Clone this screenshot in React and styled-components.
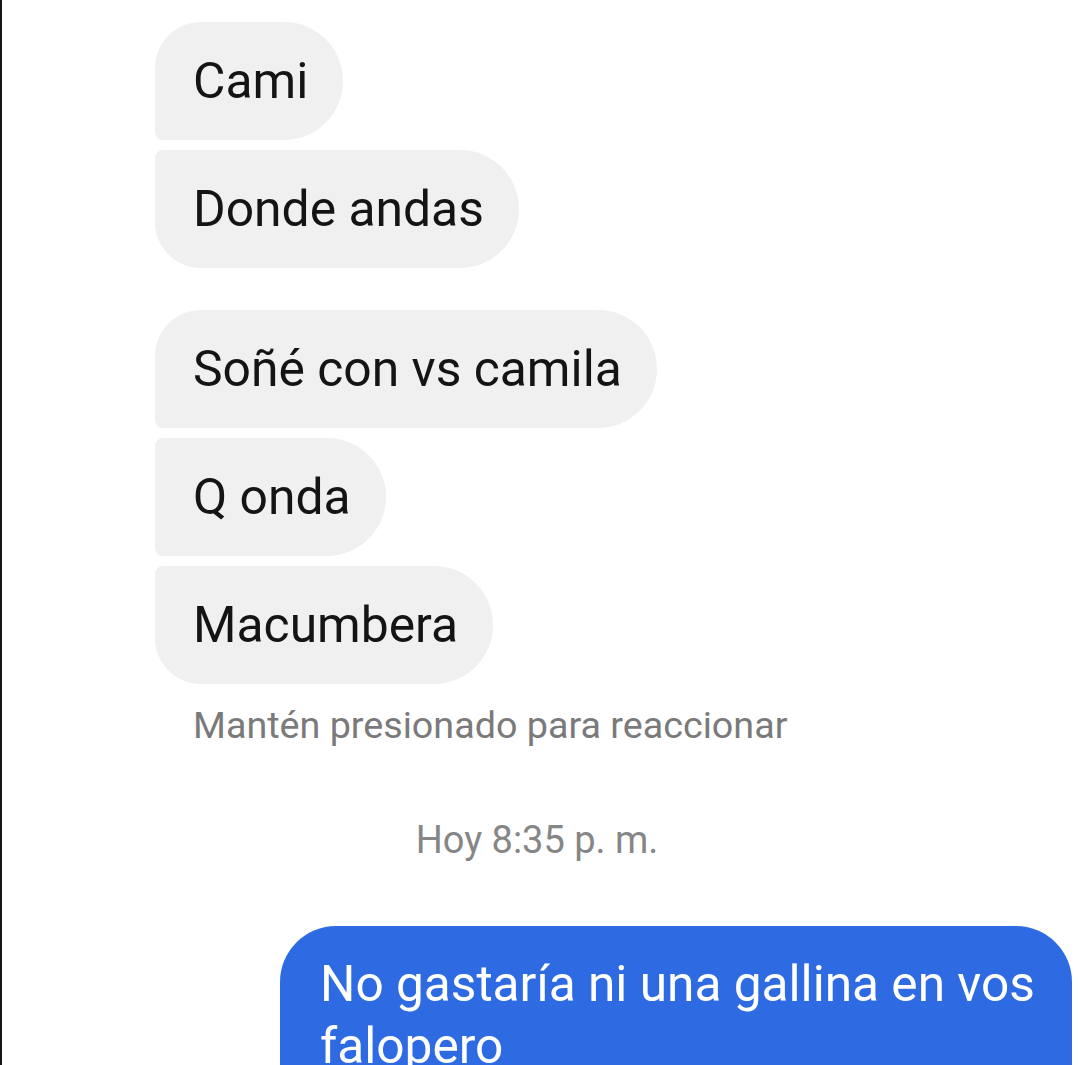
import React from "react";
import styled, { createGlobalStyle } from "styled-components";

const GlobalStyle = createGlobalStyle`
  html, body {
    margin: 0;
    padding: 0;
    background: #ffffff;
  }
  body {
    font-family: Roboto, "Noto Sans", "Liberation Sans", sans-serif;
  }
`;

const Screen = styled.div`
  width: 1080px;
  height: 1065px;
  box-sizing: border-box;
  border-left: 2px solid #151515;
  background: #ffffff;
  overflow: hidden;
  padding: 22px 8px 0 153px;
  display: flex;
  flex-direction: column;
`;

const Group = styled.div`
  display: flex;
  flex-direction: column;
  align-items: flex-start;
  gap: 10px;
  margin-top: ${(props) => props.offset || 0}px;
`;

const Bubble = styled.div`
  background: #f0f0f0;
  color: #141414;
  font-size: 49.8px;
  line-height: 58px;
  padding: 30px 35px 30px 38px;
  border-radius: ${(props) => (props.first ? "46px" : "8px")} 59px 59px
    ${(props) => (props.last ? "46px" : "8px")};
  white-space: nowrap;
`;

const Hint = styled.div`
  margin-top: 19px;
  margin-left: 38px;
  font-size: 37.7px;
  line-height: 44px;
  color: #7a7a7a;
`;

const Stamp = styled.div`
  margin-top: 71px;
  margin-left: -153px;
  text-align: center;
  font-size: 38px;
  line-height: 44px;
  color: #868686;
`;

const Outgoing = styled.div`
  align-self: flex-end;
  margin-top: 64px;
  width: 792px;
  box-sizing: border-box;
  background: #2e6be2;
  color: #ffffff;
  font-size: 49.6px;
  line-height: 62px;
  padding: 27px 28px 30px 40px;
  border-radius: 56px 56px 0 0;
`;

const conversation = [
  ["Cami", "Donde andas"],
  ["Soñé con vs camila", "Q onda", "Macumbera"],
];

export default function App() {
  return (
    <>
      <GlobalStyle />
      <Screen>
        {conversation.map((group, gi) => (
          <Group key={gi} offset={gi === 0 ? 0 : 42}>
            {group.map((text, i) => (
              <Bubble key={text} first={i === 0} last={i === group.length - 1}>
                {text}
              </Bubble>
            ))}
          </Group>
        ))}
        <Hint>Mantén presionado para reaccionar</Hint>
        <Stamp>Hoy 8:35 p. m.</Stamp>
        <Outgoing>No gastaría ni una gallina en vos falopero</Outgoing>
      </Screen>
    </>
  );
}
